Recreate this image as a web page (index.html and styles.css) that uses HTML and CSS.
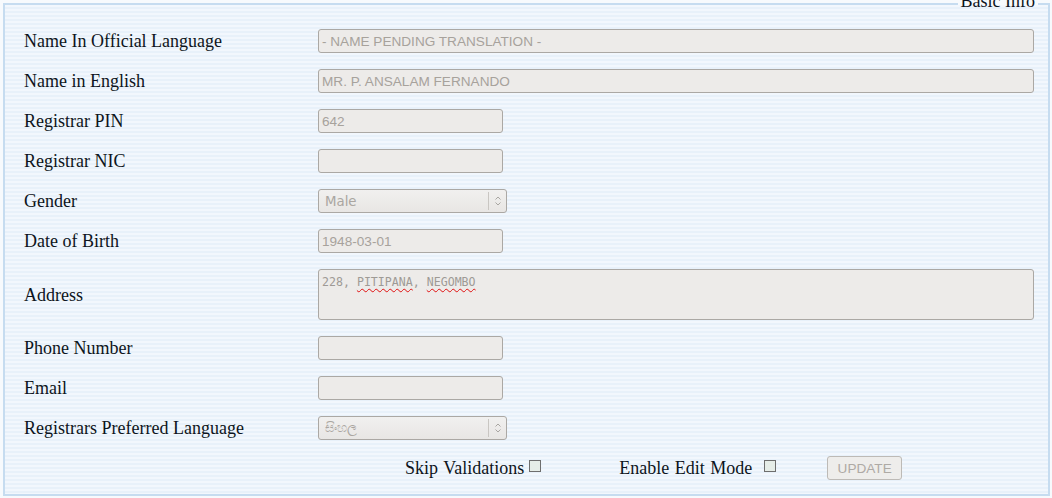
FILE: index.html
```html
<!DOCTYPE html>
<html lang="en">
<head>
<meta charset="utf-8">
<title>Basic Info</title>
<link rel="stylesheet" href="styles.css">
</head>
<body>
<fieldset class="panel">
  <legend class="panel-title">Basic Info</legend>
  <div class="form">
    <label class="lbl">Name In Official Language</label>
    <input class="field wide" type="text" value="- NAME PENDING TRANSLATION -" disabled>

    <label class="lbl">Name in English</label>
    <input class="field wide" type="text" value="MR. P. ANSALAM FERNANDO" disabled>

    <label class="lbl">Registrar PIN</label>
    <input class="field short" type="text" value="642" disabled>

    <label class="lbl">Registrar NIC</label>
    <input class="field short" type="text" value="" disabled>

    <label class="lbl">Gender</label>
    <div class="select">
      <span class="select-text">Male</span>
      <span class="select-arrow">
        <svg width="8" height="12" viewBox="0 0 8 12"><path d="M1.5 4.5 L4 2 L6.5 4.5 M1.5 7.5 L4 10 L6.5 7.5" fill="none" stroke="#a9a6a2" stroke-width="1"/></svg>
      </span>
    </div>

    <label class="lbl">Date of Birth</label>
    <input class="field short" type="text" value="1948-03-01" disabled>

    <label class="lbl">Address</label>
    <div class="field area">228, <span class="typo">PITIPANA</span>, <span class="typo">NEGOMBO</span></div>

    <label class="lbl">Phone Number</label>
    <input class="field short" type="text" value="" disabled>

    <label class="lbl">Email</label>
    <input class="field short" type="text" value="" disabled>

    <label class="lbl">Registrars Preferred Language</label>
    <div class="select">
      <span class="select-text">සිංහල</span>
      <span class="select-arrow">
        <svg width="8" height="12" viewBox="0 0 8 12"><path d="M1.5 4.5 L4 2 L6.5 4.5 M1.5 7.5 L4 10 L6.5 7.5" fill="none" stroke="#a9a6a2" stroke-width="1"/></svg>
      </span>
    </div>

    <div class="actions">
      <span class="act-label">Skip Validations</span>
      <span class="check check-skip"></span>
      <span class="act-label act-edit">Enable Edit Mode</span>
      <span class="check check-edit"></span>
      <button class="btn" disabled>UPDATE</button>
    </div>
  </div>
</fieldset>
</body>
</html>
```
FILE: styles.css
```css
html, body {
  margin: 0;
  padding: 0;
  background: #f7fafd;
}

body {
  font-family: "Liberation Serif", "Times New Roman", serif;
  font-size: 18px;
  color: #0d1420;
  overflow: hidden;
}

.panel {
  margin: -6px 2px 0 3px;
  padding: 15px 10px 14px 19px;
  border: 2px solid #c6dcf0;
  background: repeating-linear-gradient(to bottom, #f2f7fd 0px, #f2f7fd 2px, #e8f1fa 2px, #e8f1fa 4px);
  min-width: 0;
}

.panel-title {
  margin-left: auto;
  padding: 0 3px;
  font-size: 18px;
  line-height: 20px;
  position: relative;
  top: -3px;
  color: #0d1420;
}

.form {
  display: grid;
  grid-template-columns: 294px 1fr;
  row-gap: 16px;
  align-items: center;
  padding-right: 4px;
}

.lbl {
  line-height: 20px;
  white-space: nowrap;
}

.field {
  box-sizing: border-box;
  height: 24px;
  margin: 0;
  padding: 0 3px;
  border: 1px solid #aba8a4;
  border-radius: 3px;
  background: #edebe9;
  color: #a7a29c;
  -webkit-text-fill-color: #a7a29c;
  font-family: "Liberation Sans", Arial, sans-serif;
  font-size: 13.6px;
  opacity: 1;
}

.wide {
  width: 716px;
}

.short {
  width: 185px;
}

.area {
  width: 716px;
  height: 51px;
  padding: 5px 3px 0;
  font-family: "DejaVu Sans Mono", monospace;
  font-size: 11.6px;
  line-height: 14px;
  color: #9e9a95;
  -webkit-text-fill-color: #9e9a95;
}

.typo {
  text-decoration: underline wavy #e01010;
  text-decoration-thickness: 1px;
  text-underline-offset: 2px;
}

.select {
  box-sizing: border-box;
  width: 189px;
  height: 24px;
  display: flex;
  align-items: center;
  border: 1px solid #aba8a4;
  border-radius: 3px;
  background: linear-gradient(to bottom, #f1f0ef, #e8e6e4);
  font-family: "DejaVu Sans", "Noto Sans", sans-serif;
  font-size: 13.333px;
  color: #aaa6a1;
}

.select-text {
  flex: 1;
  padding-left: 6px;
}

.select-arrow {
  width: 17px;
  height: 18px;
  border-left: 1px solid #c9c6c2;
  display: flex;
  align-items: center;
  justify-content: center;
}

.actions {
  grid-column: 1 / -1;
  display: flex;
  align-items: center;
  height: 24px;
  padding-left: 381px;
}

.act-label {
  line-height: 20px;
  white-space: nowrap;
  word-spacing: 1px;
}

.act-edit {
  margin-left: 78px;
}

.check {
  box-sizing: border-box;
  width: 12px;
  height: 12px;
  border: 1px solid #6e6e6e;
  background: #e6ede8;
  margin-top: -4px;
}

.check-skip {
  margin-left: 5px;
}

.check-edit {
  margin-left: 12px;
}

.btn {
  box-sizing: border-box;
  margin-left: 51px;
  width: 75px;
  height: 24px;
  padding: 0;
  border: 1px solid #bdbab6;
  border-radius: 3px;
  background: #eeedeb;
  color: #aeaaa5;
  font-family: "Liberation Sans", Arial, sans-serif;
  font-size: 13.6px;
}
```
